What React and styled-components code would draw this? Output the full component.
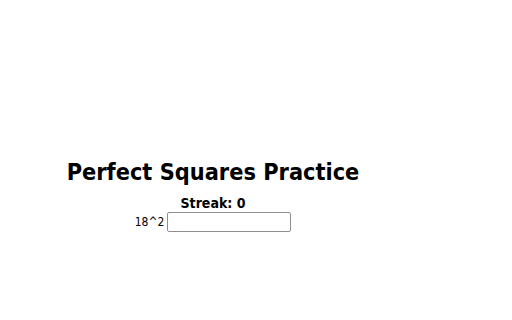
import React from "react";
import styled, { createGlobalStyle } from "styled-components";

const Global = createGlobalStyle`
  body {
    margin: 0;
    background: #ffffff;
    font-family: "DejaVu Sans Condensed", "DejaVu Sans", sans-serif;
    color: #000;
  }
`;

const Wrapper = styled.div`
  width: 426px;
  padding-top: 155px;
  display: flex;
  flex-direction: column;
  align-items: center;
`;

const Title = styled.h1`
  margin: 0;
  font-size: 23.3px;
  font-weight: bold;
  line-height: 34px;
`;

const Streak = styled.div`
  margin-top: 6px;
  font-size: 14px;
  font-weight: bold;
  line-height: 17px;
`;

const Row = styled.div`
  display: flex;
  align-items: center;
  gap: 3px;
  font-size: 12px;
`;

const Input = styled.input`
  box-sizing: border-box;
  width: 124px;
  height: 20px;
  padding: 1px 2px;
  border: 1px solid #8f8f8f;
  border-radius: 2px;
  font-size: 12px;
`;

export default function App() {
  return (
    <>
      <Global />
      <Wrapper>
        <Title>Perfect Squares Practice</Title>
        <Streak>Streak: 0</Streak>
        <Row>
          <span>18^2</span>
          <Input type="text" />
        </Row>
      </Wrapper>
    </>
  );
}
